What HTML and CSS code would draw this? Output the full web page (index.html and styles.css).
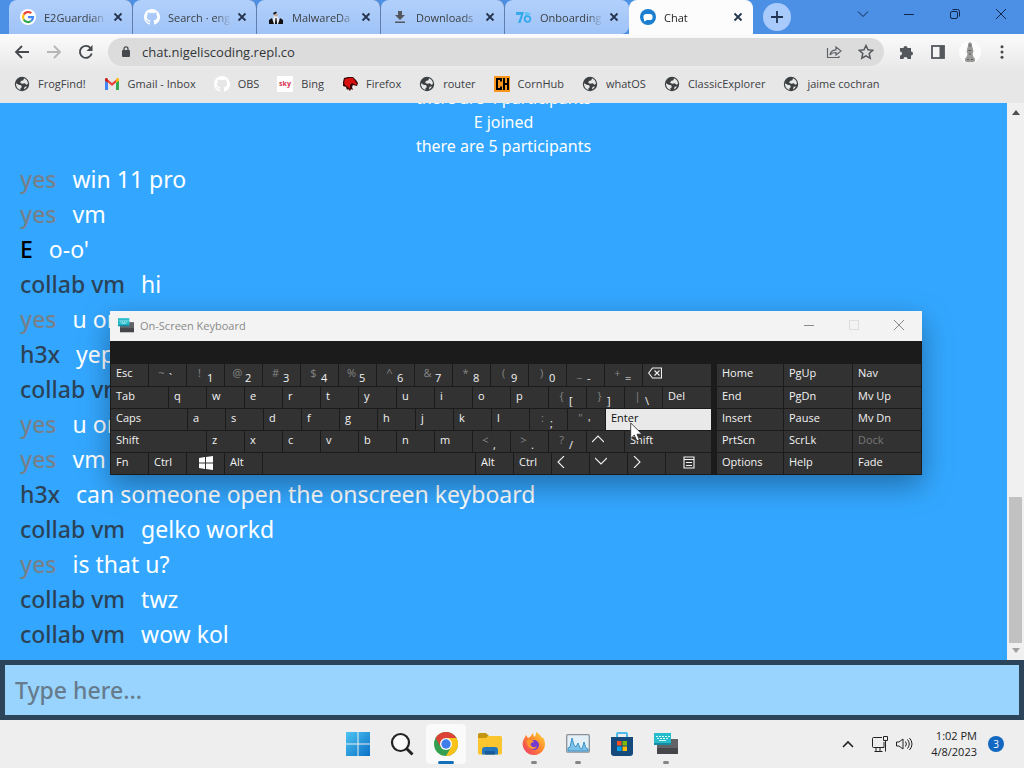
FILE: index.html
```html
<!DOCTYPE html>
<html lang="en">
<head>
    <meta charset="UTF-8">
    <meta name="viewport" content="width=device-width, initial-scale=1.0">
    <title>Chat</title>
    <link rel="stylesheet" href="styles.css">
</head>
<body>
    <!-- shared icons -->
    <svg class="defs" width="0" height="0">
        <symbol id="i-close" viewBox="0 0 10 10"><path d="M1.5 1.5l7 7M8.5 1.5l-7 7" stroke="currentColor" stroke-width="1.8"/></symbol>
        <symbol id="i-globe" viewBox="0 0 16 16"><circle cx="8" cy="8" r="7.2" fill="#3c4043"/><path d="M2 7.2l2.6 1.6 2.6.4.6 2-1.4 1v1.7A6 6 0 0 1 2 7.2zM10 2.3l-.6 2-2.4.8-.8 1.7 2 .9 2.6-.5 1.6 1.6 1.5-.8A6 6 0 0 0 10 2.3zM13 10.4l-2.4.4-.6 2.6a6 6 0 0 0 3-3z" fill="#e8e8e8"/></symbol>
        <symbol id="i-github" viewBox="0 0 16 16"><path fill="#fff" d="M8 0C3.58 0 0 3.58 0 8c0 3.54 2.29 6.53 5.47 7.59.4.07.55-.17.55-.38v-1.49c-2.01.37-2.53-.49-2.69-.94-.09-.23-.48-.94-.82-1.13-.28-.15-.68-.52-.01-.53.63-.01 1.08.58 1.23.82.72 1.21 1.87.87 2.33.66.07-.52.28-.87.51-1.07-1.78-.2-3.64-.89-3.64-3.95 0-.87.31-1.59.82-2.15-.08-.2-.36-1.02.08-2.12 0 0 .67-.21 2.2.82a7.6 7.6 0 0 1 4 0c1.53-1.04 2.2-.82 2.2-.82.44 1.1.16 1.92.08 2.12.51.56.82 1.27.82 2.15 0 3.07-1.87 3.75-3.65 3.95.29.25.54.73.54 1.48v2.2c0 .21.15.46.55.38A8 8 0 0 0 8 0z"/></symbol>
        <symbol id="i-osk" viewBox="0 0 24 22"><path fill="#606266" d="M3 6h21v15H3z"/><path fill="#44464a" d="M3 15h21v6H3z"/><path fill="#27bccb" d="M0 0h17v12H0z"/><path fill="#168ba1" d="M0 10h17v2H0z"/><path fill="#d5f8fa" d="M2 3h2v1H2zM5 3h2v1H5zM8 3h2v1H8zM11 3h2v1h-2zM14 3h2v1h-2zM3 5h2v1H3zM6 5h2v1H6zM9 5h2v1H9zM12 5h2v1h-2zM5 7h7v1H5z"/></symbol>
    </svg>

    <header class="browser">
        <div class="tabstrip">
            <div class="tab">
                <svg class="icon" viewBox="0 0 16 16"><circle cx="8" cy="8" r="8" fill="#fff"/><g fill="none" stroke-width="2.2"><path stroke="#ea4335" d="M3.7 5.5A5 5 0 0 1 11.3 4.2"/><path stroke="#fbbc05" d="M3.7 5.5a5 5 0 0 0 0 5"/><path stroke="#34a853" d="M3.7 10.5a5 5 0 0 0 7.4 1.5"/><path stroke="#4285f4" d="M8 8.2h5a5 5 0 0 1-1.9 3.8"/></g></svg>
                <span class="tab-title">E2Guardian</span>
                <button class="tab-close" aria-label="Close tab"><svg width="10" height="10"><use href="#i-close"/></svg></button>
            </div>
            <div class="tab">
                <svg class="icon"><use href="#i-github"/></svg>
                <span class="tab-title">Search · eng</span>
                <button class="tab-close" aria-label="Close tab"><svg width="10" height="10"><use href="#i-close"/></svg></button>
            </div>
            <div class="tab">
                <svg class="icon" viewBox="0 0 16 16"><path fill="#e8edf5" d="M5 15V9l2-3 2 1 2 3v5z"/><path fill="#111" d="M1 15v-4l3-2 2 6zM15 15v-4l-3-2-2 6zM5 4l3-1.5 1 1.500-3 2zM7.500 9h1l.6 6h-2.200z"/><circle cx="8" cy="6" r="1.600" fill="#c9a58a"/></svg>
                <span class="tab-title">MalwareDa</span>
                <button class="tab-close" aria-label="Close tab"><svg width="10" height="10"><use href="#i-close"/></svg></button>
            </div>
            <div class="tab">
                <svg class="icon" viewBox="0 0 16 16"><path fill="#54585e" d="M6 2h4v4h3L8 11 3 6h3zM3 12.5h10V14H3z"/></svg>
                <span class="tab-title">Downloads</span>
                <button class="tab-close" aria-label="Close tab"><svg width="10" height="10"><use href="#i-close"/></svg></button>
            </div>
            <div class="tab last">
                <svg class="icon" viewBox="0 0 16 16"><path fill="#35a9ec" d="M0 3h8L4.5 14H2L5 6H0z"/><path fill="#5cc3f5" d="M9 3l6 1-2 2-4 1z"/><circle cx="11.5" cy="10" r="2.8" fill="none" stroke="#35a9ec" stroke-width="1.8"/></svg>
                <span class="tab-title">Onboarding</span>
                <button class="tab-close" aria-label="Close tab"><svg width="10" height="10"><use href="#i-close"/></svg></button>
            </div>
            <div class="tab active">
                <svg class="icon" viewBox="0 0 16 16"><circle cx="8" cy="8" r="8" fill="#1a7fd0"/><rect x="3.5" y="5" width="9" height="6" rx="2.6" fill="#fff"/><path fill="#fff" d="M4 7v5.500l4-2z"/></svg>
                <span class="tab-title">Chat</span>
                <button class="tab-close" aria-label="Close tab"><svg width="10" height="10"><use href="#i-close"/></svg></button>
            </div>
            <button class="new-tab" aria-label="New tab"><svg width="12" height="12" viewBox="0 0 12 12"><path d="M6 0v12M0 6h12" stroke="#1f3350" stroke-width="1.8"/></svg></button>
            <div class="window-buttons">
                <button aria-label="Search tabs"><svg width="12" height="12" viewBox="0 0 12 12"><path d="M1 3.5l5 5 5-5"/></svg></button>
                <button aria-label="Minimize"><svg width="12" height="12" viewBox="0 0 12 12"><path d="M1 6.5h10"/></svg></button>
                <button aria-label="Restore"><svg width="12" height="12" viewBox="0 0 12 12"><rect x="1.5" y="3.5" width="7" height="7" rx="1.5"/><path d="M3.5 1.5h5a2 2 0 0 1 2 2v5"/></svg></button>
                <button aria-label="Close"><svg width="12" height="12" viewBox="0 0 12 12"><path d="M1 1l10 10M11 1L1 11"/></svg></button>
            </div>
        </div>

        <div class="toolbar">
            <button class="tool" aria-label="Back"><svg class="icon" viewBox="0 0 16 16"><path d="M15 8H2M8 2L2 8l6 6" fill="none" stroke="#45494d" stroke-width="1.8"/></svg></button>
            <button class="tool" aria-label="Forward"><svg class="icon" viewBox="0 0 16 16"><path d="M1 8h13M8 2l6 6-6 6" fill="none" stroke="#b4b6b8" stroke-width="1.8"/></svg></button>
            <button class="tool" aria-label="Reload"><svg class="icon" viewBox="0 0 16 16"><path d="M13.7 9.5A6 6 0 1 1 12.5 4" fill="none" stroke="#45494d" stroke-width="1.9"/><path d="M14.5 1v6h-6z" fill="#45494d"/></svg></button>
            <div class="omnibox">
                <svg width="12" height="14" viewBox="0 0 12 14"><rect x="2" y="5" width="8" height="7" rx="1" fill="#45494d"/><path d="M4 5.5V3.8a2 2 0 0 1 4 0v1.7" fill="none" stroke="#45494d" stroke-width="1.3"/></svg>
                <input type="text" value="chat.nigeliscoding.repl.co" aria-label="Address">
                <button class="tool" aria-label="Share"><svg class="icon" viewBox="0 0 16 16"><path d="M1.5 4v9.5H13V12M4 11c.5-3.5 2.5-5 6-5.2V3l5 4-5 4V8.5c-3 0-4.5.5-6 2.5z" fill="none" stroke="#5f6368" stroke-width="1.2"/></svg></button>
                <button class="tool" aria-label="Bookmark this tab"><svg class="icon" viewBox="0 0 16 16"><path d="M8 1.5l2 4.3 4.7.5-3.5 3.2 1 4.7L8 11.8l-4.2 2.4 1-4.7-3.5-3.2 4.7-.5z" fill="none" stroke="#55595d" stroke-width="1.5"/></svg></button>
            </div>
            <button class="tool" aria-label="Extensions"><svg class="icon" viewBox="0 0 16 16"><path d="M2 4h3.500a2 2 0 1 1 4 0H13v3.500a2 2 0 1 1 0 4V15H9.500a2 2 0 0 0-4 0H2v-3.500a2 2 0 0 0 0-4z" fill="#54585c"/></svg></button>
            <button class="tool" aria-label="Side panel"><svg class="icon" viewBox="0 0 16 16"><rect x="2" y="2" width="12" height="12" fill="#f4f4f4" stroke="#54585c" stroke-width="1.8"/><path d="M9.5 2H14v12H9.5z" fill="#54585c"/></svg></button>
            <button class="tool" aria-label="Profile"><svg width="22" height="22" viewBox="0 0 22 22"><circle cx="11" cy="11" r="11" fill="#fcfcfc"/><path d="M11 1q2.500 1 2 4l1 3q1 3-.5 5l1 3q2 1 1.500 4-2 2-5 1-3 1-5-1-.5-3 1.500-4l1-3Q7 11 8 8l1-3q-.5-3 2-4z" fill="#9a9a98"/><path d="M11 3v3M9.500 9.500h3M10 13h2M8 18.500h2M12 18.500h2" stroke="#5d5d5b"/></svg></button>
            <button class="tool" aria-label="Menu"><svg class="icon" viewBox="0 0 16 16" fill="#45494d"><circle cx="8" cy="2.8" r="1.5"/><circle cx="8" cy="8" r="1.5"/><circle cx="8" cy="13.2" r="1.5"/></svg></button>
        </div>

        <nav class="bookmarks">
            <a href="#"><svg class="icon"><use href="#i-globe"/></svg>FrogFind!</a>
            <a href="#"><svg class="icon" viewBox="0 0 16 16"><path fill="#4285f4" d="M1 4l3 2.5V14H1z"/><path fill="#34a853" d="M12 6.5L15 4v10h-3z"/><path fill="#ea4335" d="M1 3l1.500-.5L8 7l5.500-4.500L12 6.500 8 10 4 6.500 1 4.500z"/><path fill="#c5221f" d="M1 5V3.500A1.500 1.500 0 0 1 3.500 2.300L4 6.500z"/><path fill="#fbbc04" d="M15 5V3.500a1.500 1.500 0 0 0-2.500-1.200L12 6.500z"/></svg>Gmail - Inbox</a>
            <a href="#"><svg class="icon"><use href="#i-github"/></svg>OBS</a>
            <a href="#"><svg class="icon" viewBox="0 0 16 16"><path fill="#fff" d="M0 0h16v16H0z"/><text x="8" y="10" text-anchor="middle" class="sky">sky</text></svg>Bing</a>
            <a href="#"><svg class="icon" viewBox="0 0 16 16"><path fill="#3b0505" d="M2 2l4-1h5l3 3 2 3-1 3-4-1-1 2 1 3-2-1-1 2-2-2-1 1-1-3-3-1V6z"/><path fill="#d80f0f" d="M3 3l4-1h4l2 3 2 3-1 1-4-2-2 2v4l-2-2-2-1-2-3z"/></svg>Firefox</a>
            <a href="#"><svg class="icon"><use href="#i-globe"/></svg>router</a>
            <a href="#"><svg class="icon" viewBox="0 0 16 16"><path fill="#f7971d" d="M0 0h16v16H0z"/><path fill="none" stroke="#000" stroke-width="2" d="M7 5.500V3H3v10h4v-2.500M10 2v12M14 2v12M10 8h4"/></svg>CornHub</a>
            <a href="#"><svg class="icon"><use href="#i-globe"/></svg>whatOS</a>
            <a href="#"><svg class="icon"><use href="#i-globe"/></svg>ClassicExplorer</a>
            <a href="#"><svg class="icon"><use href="#i-globe"/></svg>jaime cochran</a>
        </nav>
    </header>

    <main class="chat">
        <div class="pages">
            <ul class="messages">
                <li class="log">there are 4 participants</li>
                <li class="log">E joined</li>
                <li class="log">there are 5 participants</li>
                <li class="message"><span class="name yes">yes</span>win 11 pro</li>
                <li class="message"><span class="name yes">yes</span>vm</li>
                <li class="message"><span class="name e">E</span>o-o'</li>
                <li class="message"><span class="name">collab vm</span>hi</li>
                <li class="message"><span class="name yes">yes</span>u on</li>
                <li class="message"><span class="name">h3x</span>yep</li>
                <li class="message"><span class="name">collab vm</span></li>
                <li class="message"><span class="name yes">yes</span>u on</li>
                <li class="message"><span class="name yes">yes</span>vm</li>
                <li class="message"><span class="name">h3x</span>can someone open the onscreen keyboard</li>
                <li class="message"><span class="name">collab vm</span>gelko workd</li>
                <li class="message"><span class="name yes">yes</span>is that u?</li>
                <li class="message"><span class="name">collab vm</span>twz</li>
                <li class="message"><span class="name">collab vm</span>wow kol</li>
            </ul>
            <div class="scrollbar">
                <svg width="8" height="5" viewBox="0 0 8 5"><path d="M0 5l4-5 4 5z" fill="#505050"/></svg>
                <div class="track"><div class="thumb"></div></div>
                <svg width="8" height="5" viewBox="0 0 8 5"><path d="M0 0l4 5 4-5z" fill="#a0a0a0"/></svg>
            </div>
        </div>
        <input class="input-message" type="text" placeholder="Type here..." aria-label="Message">
    </main>

    <section class="osk" aria-label="On-Screen Keyboard">
        <div class="osk-title">
            <svg width="16" height="15"><use href="#i-osk"/></svg>
            <span>On-Screen Keyboard</span>
            <button aria-label="Minimize"><svg width="12" height="12" viewBox="0 0 12 12"><path d="M1 6.5h10" stroke="#8a8a8a"/></svg></button>
            <button aria-label="Maximize" disabled><svg width="12" height="12" viewBox="0 0 12 12"><rect x="1.5" y="1.5" width="9" height="9" fill="none" stroke="#dedede"/></svg></button>
            <button aria-label="Close"><svg width="12" height="12" viewBox="0 0 12 12"><path d="M1 1l10 10M11 1L1 11" stroke="#8a8a8a"/></svg></button>
        </div>
        <div class="osk-body">
            <div class="keys">
                <div class="row top">
                    <button class="key">Esc</button>
                    <button class="key two"><i>~</i><b>`</b></button>
                    <button class="key two"><i>!</i><b>1</b></button>
                    <button class="key two"><i>@</i><b>2</b></button>
                    <button class="key two"><i>#</i><b>3</b></button>
                    <button class="key two"><i>$</i><b>4</b></button>
                    <button class="key two"><i>%</i><b>5</b></button>
                    <button class="key two"><i>^</i><b>6</b></button>
                    <button class="key two"><i>&amp;</i><b>7</b></button>
                    <button class="key two"><i>*</i><b>8</b></button>
                    <button class="key two"><i>(</i><b>9</b></button>
                    <button class="key two"><i>)</i><b>0</b></button>
                    <button class="key two"><i>_</i><b>-</b></button>
                    <button class="key two"><i>+</i><b>=</b></button>
                    <button class="key wide" aria-label="Backspace"><svg width="14" height="12" viewBox="0 0 14 12"><path d="M4.5 1h9v10h-9L.7 6zM6.500 3.500l5 5M11.500 3.500l-5 5"/></svg></button>
                </div>
                <div class="row">
                    <button class="key tab-key">Tab</button>
                    <button class="key">q</button>
                    <button class="key">w</button>
                    <button class="key">e</button>
                    <button class="key">r</button>
                    <button class="key">t</button>
                    <button class="key">y</button>
                    <button class="key">u</button>
                    <button class="key">i</button>
                    <button class="key">o</button>
                    <button class="key">p</button>
                    <button class="key two"><i>{</i><b>[</b></button>
                    <button class="key two"><i>}</i><b>]</b></button>
                    <button class="key two"><i>|</i><b>\</b></button>
                    <button class="key wide">Del</button>
                </div>
                <div class="row">
                    <button class="key caps-key">Caps</button>
                    <button class="key">a</button>
                    <button class="key">s</button>
                    <button class="key">d</button>
                    <button class="key">f</button>
                    <button class="key">g</button>
                    <button class="key">h</button>
                    <button class="key">j</button>
                    <button class="key">k</button>
                    <button class="key">l</button>
                    <button class="key two"><i>:</i><b>;</b></button>
                    <button class="key two"><i>"</i><b>'</b></button>
                    <button class="key wide pressed">Enter</button>
                </div>
                <div class="row">
                    <button class="key shift-key">Shift</button>
                    <button class="key">z</button>
                    <button class="key">x</button>
                    <button class="key">c</button>
                    <button class="key">v</button>
                    <button class="key">b</button>
                    <button class="key">n</button>
                    <button class="key">m</button>
                    <button class="key two"><i>&lt;</i><b>,</b></button>
                    <button class="key two"><i>&gt;</i><b>.</b></button>
                    <button class="key two"><i>?</i><b>/</b></button>
                    <button class="key" aria-label="Up"><svg width="12" height="12" viewBox="0 0 12 12"><path d="M0 8l6-6 6 6"/></svg></button>
                    <button class="key wide">Shift</button>
                </div>
                <div class="row">
                    <button class="key">Fn</button>
                    <button class="key">Ctrl</button>
                    <button class="key center" aria-label="Windows"><svg width="14" height="14" viewBox="0 0 14 14"><path class="solid" d="M0 2l6-.9v5.400H0zM7 1l7-1v6.500H7zM0 7.500h6v5.400L0 12zM7 7.500h7V14l-7-1z"/></svg></button>
                    <button class="key">Alt</button>
                    <button class="key wide" aria-label="Space"></button>
                    <button class="key">Alt</button>
                    <button class="key">Ctrl</button>
                    <button class="key" aria-label="Left"><svg width="12" height="12" viewBox="0 0 12 12"><path d="M7 0L1 6l6 6"/></svg></button>
                    <button class="key" aria-label="Down"><svg width="12" height="12" viewBox="0 0 12 12"><path d="M0 2l6 6 6-6"/></svg></button>
                    <button class="key" aria-label="Right"><svg width="12" height="12" viewBox="0 0 12 12"><path d="M1 0l6 6-6 6"/></svg></button>
                    <button class="key center menu-key" aria-label="Menu"><svg width="12" height="13" viewBox="0 0 12 13"><path d="M1 1h10v11H1zM1 3.500h10M3 6.500h6M3 9.500h6"/></svg></button>
                </div>
            </div>
            <div class="side">
                <button class="key">Home</button><button class="key">PgUp</button><button class="key">Nav</button>
                <button class="key">End</button><button class="key">PgDn</button><button class="key">Mv Up</button>
                <button class="key">Insert</button><button class="key">Pause</button><button class="key">Mv Dn</button>
                <button class="key">PrtScn</button><button class="key">ScrLk</button><button class="key" disabled>Dock</button>
                <button class="key">Options</button><button class="key">Help</button><button class="key">Fade</button>
            </div>
        </div>
    </section>

    <svg class="cursor" width="13" height="20" viewBox="0 0 13 20"><path d="M.7 1v15.500l3.600-3.400 2.500 5.700 2.600-1.100L7 12.200h5z" fill="#fff" stroke="#222" stroke-width=".8"/></svg>

    <footer class="taskbar">
        <div class="apps">
            <button aria-label="Start"><svg width="24" height="24" viewBox="0 0 24 24"><defs><linearGradient id="win" x1="0" y1="0" x2="1" y2="1"><stop offset="0" stop-color="#4cc5f2"/><stop offset="1" stop-color="#0b6fc7"/></linearGradient></defs><path fill="url(#win)" d="M0 0h11.500v11.500H0zM12.500 0H24v11.500H12.500zM0 12.500h11.500V24H0zM12.500 12.500H24V24H12.500z"/></svg></button>
            <button aria-label="Search"><svg width="24" height="24" viewBox="0 0 24 24"><circle cx="10.5" cy="10.5" r="8.500" fill="#fafafa" stroke="#222" stroke-width="2.2"/><path d="M16.500 16.500l6 6" stroke="#222" stroke-width="3"/></svg></button>
            <button class="current" aria-label="Chrome"><svg width="24" height="24" viewBox="0 0 24 24"><circle cx="12" cy="12" r="12" fill="#34a04f"/><path fill="#dd4237" d="M1.600 6A12 12 0 0 1 22.400 6H12l-5.200 9z"/><path fill="#fbc21a" d="M22.400 6A12 12 0 0 1 12 24l5.200-9L12 6z"/><circle cx="12" cy="12" r="6" fill="#fff"/><circle cx="12" cy="12" r="4.700" fill="#3f7de8"/></svg></button>
            <button aria-label="File Explorer"><svg width="24" height="22" viewBox="0 0 24 22"><path fill="#c49511" d="M0 1.500Q0 0 1.500 0H8l3 3-3 3H0z"/><path fill="#fbc52f" d="M0 5h8l2-2h12.500Q24 3 24 4.500V20q0 1.500-1.500 1.500h-21Q0 21.500 0 20z"/><path fill="#2577bd" d="M4 21.500V17q0-3 3-3h10q3 0 3 3v4.500z"/><path fill="#185a9a" d="M7 18h10v3.500H7z"/></svg></button>
            <button class="running" aria-label="Firefox"><svg width="24" height="24" viewBox="0 0 24 24"><defs><linearGradient id="fox" x1="1" y1="0" x2="0" y2="1"><stop offset="0" stop-color="#ffdc3e"/><stop offset=".45" stop-color="#ff8a2b"/><stop offset="1" stop-color="#ef2f6b"/></linearGradient></defs><path fill="url(#fox)" d="M2.500 6L4 3l2 3 2-1 3-4 1 4c2-1 2-3 2-5 3 1.500 5 4 6 6l1-.5c2 3 2.500 6 1.500 10A11.300 11.300 0 0 1 .8 14C.3 11 1 8 2.500 6z"/><circle cx="12" cy="13" r="5" fill="#743bd0"/><path fill="#ff9a2e" d="M5 8c3-1 6 0 7 2l-3 1c-1 2 0 3 2 4 2 .5 3 0 4-1-1 4-7 4-9 0C5 12 4.500 10 5 8z"/></svg></button>
            <button class="running" aria-label="Task Manager"><svg width="24" height="20" viewBox="0 0 24 20"><rect x=".7" y=".7" width="22.600" height="17.500" rx="1" fill="#e3f0f8" stroke="#8b9097" stroke-width="1.300"/><path fill="#7cc1e8" stroke="#2484bd" stroke-width=".8" d="M2 17v-3l2-1 2-9 2 7 2 2 2-4 2 5 2 1 2-7 2 6 2 1v2z"/></svg></button>
            <button aria-label="Microsoft Store"><svg width="24" height="24" viewBox="0 0 24 24"><path fill="none" stroke="#4bbbe9" stroke-width="2" d="M7 6V2q0-1 1-1h8q1 0 1 1v4"/><path fill="#174a7c" d="M1 5h22v16q0 3-3 3H4q-3 0-3-3z"/><path fill="#f25022" d="M7 9h4.500v4.500H7z"/><path fill="#7fba00" d="M12.500 9H17v4.500h-4.500z"/><path fill="#00a4ef" d="M7 14.500h4.500V19H7z"/><path fill="#ffb900" d="M12.500 14.500H17V19h-4.500z"/></svg></button>
            <button class="running" aria-label="On-Screen Keyboard"><svg width="24" height="22"><use href="#i-osk"/></svg></button>
        </div>
        <div class="tray">
            <button aria-label="Show hidden icons"><svg width="12" height="12" viewBox="0 0 12 12"><path d="M1 9l5-5 5 5" stroke-width="1.600"/></svg></button>
            <button aria-label="Network"><svg width="18" height="18" viewBox="0 0 18 18"><path d="M11 2.500H2.500q-1 0-1 1v8q0 1 1 1H13V7M5 12.500V16M9 12.500V16M3.500 16.500h8M12.500 1.500h4v4h-4zM14.500 5.500v11"/></svg></button>
            <button aria-label="Volume"><svg width="18" height="18" viewBox="0 0 18 18"><path d="M1.500 7v4H4l4 3V4L4 7zM10.500 6.500q1.800 2.500 0 5M12.500 4.500q3.500 4.500 0 9M14.500 3q5 6 0 12"/></svg></button>
            <div class="clock"><time>1:02 PM</time><time>4/8/2023</time></div>
            <button class="badge" aria-label="3 notifications">3</button>
        </div>
    </footer>
</body>
</html>
```

FILE: styles.css
```css
* {
    box-sizing: border-box;
}
body {
    margin: 0;
    height: 100vh;
    display: flex;
    flex-direction: column;
    overflow: hidden;
    font-family: "Open Sans", "Noto Sans", sans-serif;
    font-size: 11px;
    color: #3c4043;
}
button {
    font: inherit;
    color: inherit;
    background: none;
    border: none;
    padding: 0;
    display: flex;
    align-items: center;
    justify-content: center;
}
svg {
    display: block;
    flex: none;
}
.defs {
    position: absolute;
}
.icon {
    width: 16px;
    height: 16px;
}

/* tabs */
.tabstrip {
    display: flex;
    height: 34px;
    padding-left: 9px;
    background: #4b90e4;
}
.tab {
    display: flex;
    align-items: center;
    flex: 0 1 124px;
    min-width: 0;
    padding: 0 9px 0 11px;
    background: linear-gradient(#b2d0fb, #9fc3f7);
    border-right: 1px solid #5f7fae;
    border-radius: 8px 8px 0 0;
}
.tab.last {
    border-right-color: transparent;
    border-radius: 8px 8px 8px 0;
}
.tab.active {
    background: #fcfcfc;
    border-right-color: #fcfcfc;
    color: #222;
}
.tab-title {
    flex: 1;
    min-width: 0;
    margin: 0 6px 0 8px;
    overflow: hidden;
    white-space: nowrap;
    -webkit-mask-image: linear-gradient(90deg, #000 75%, transparent);
    mask-image: linear-gradient(90deg, #000 75%, transparent);
}
.tab-close {
    color: #25354d;
}
.new-tab {
    width: 28px;
    height: 28px;
    margin: 3px 10px;
    border-radius: 50%;
    background: #a9cbfb;
}
.window-buttons {
    display: flex;
    margin-left: auto;
    height: 28px;
}
.window-buttons button {
    width: 46px;
}
.window-buttons path,
.window-buttons rect {
    fill: none;
    stroke: #10254a;
}

/* toolbar */
.toolbar {
    display: flex;
    align-items: center;
    height: 36px;
    padding: 0 6px;
    background: linear-gradient(#fbfbfb, #e9e9e9);
}
.tool {
    width: 32px;
    height: 28px;
}
.omnibox {
    flex: 1;
    display: flex;
    align-items: center;
    height: 28px;
    margin: 0 6px;
    padding: 0 2px 0 12px;
    border-radius: 14px;
    background: #dcdcdc;
}
.omnibox input {
    flex: 1;
    margin-left: 10px;
    padding: 0;
    border: none;
    background: none;
    font: inherit;
    font-size: 13px;
    color: #333639;
}
.bookmarks {
    display: flex;
    align-items: center;
    gap: 18px;
    height: 33px;
    padding: 0 14px 6px;
    background: #e7e7e7;
    overflow: hidden;
}
.bookmarks a {
    display: flex;
    align-items: center;
    gap: 8px;
    white-space: nowrap;
    color: inherit;
    text-decoration: none;
}
.sky {
    font-size: 7px;
    font-weight: bold;
    fill: #d8304e;
}

/* chat */
.chat {
    flex: 1;
    min-height: 0;
    display: flex;
    flex-direction: column;
    font-family: "Noto Sans", sans-serif;
}
.pages {
    flex: 1;
    min-height: 0;
    display: flex;
    background: #33a7ff;
}
.messages {
    flex: 1;
    display: flex;
    flex-direction: column;
    justify-content: flex-end;
    margin: 0;
    padding: 0 20px 8px;
    list-style: none;
    overflow: hidden;
    color: #fff;
}
.log {
    flex: none;
    text-align: center;
    font-size: 16px;
    line-height: 24px;
}
.log + .message {
    margin-top: 4px;
}
.message {
    flex: none;
    font-size: 23px;
    line-height: 35px;
}
.name {
    margin-right: 16px;
    font-weight: 500;
    color: #2b4257;
}
.name.yes {
    color: #76808b;
}
.name.e {
    color: #000;
}
.scrollbar {
    width: 17px;
    padding: 7px 0;
    display: flex;
    flex-direction: column;
    align-items: center;
    background: #f0f0f0;
}
.track {
    flex: 1;
    display: flex;
    flex-direction: column;
    justify-content: flex-end;
    padding: 5px 0;
}
.thumb {
    width: 13px;
    height: 28%;
    background: #c1c1c1;
}
.input-message {
    width: 100%;
    height: 60px;
    padding: 0 10px;
    border: 5px solid #2c4459;
    background: #99d4ff;
    font-family: inherit;
    font-size: 23px;
    font-weight: 500;
    outline: none;
}
.input-message::placeholder {
    color: #667b8c;
}

/* on-screen keyboard */
.osk {
    position: absolute;
    left: 110px;
    top: 311px;
    width: 812px;
    background: #1b1b1b;
    color: #f2f2f2;
    box-shadow: 0 10px 28px rgba(0, 0, 0, 0.35);
}
.osk-title {
    display: flex;
    align-items: center;
    height: 30px;
    padding: 0 1px 2px 8px;
    background: #f3f3f3;
    color: #8a8a8a;
}
.osk-title span {
    flex: 1;
    margin-left: 6px;
}
.osk-title button {
    width: 45px;
    height: 28px;
}
.osk-body {
    display: flex;
    gap: 6px;
    padding: 23px 1px 1px;
}
.keys {
    flex: 1;
    display: flex;
    flex-direction: column;
    gap: 1px;
}
.row {
    display: flex;
    gap: 1px;
}
.key {
    flex: none;
    width: 37px;
    height: 21px;
    padding-left: 5px;
    justify-content: flex-start;
    background: #323232;
    line-height: 18px;
    align-items: flex-start;
}
.top .key,
.side .key:nth-child(-n+3) {
    height: 22px;
}
.key.wide {
    flex: 1;
}
.tab-key {
    width: 57px;
}
.caps-key {
    width: 76px;
}
.shift-key {
    width: 95px;
}
.menu-key {
    width: 45px;
}
.key.center {
    padding: 0;
    justify-content: center;
}
.key.pressed {
    background: #e9e9e9;
    color: #111;
}
.key:disabled {
    color: #777;
}
.key i,
.key b {
    font-style: normal;
    font-weight: normal;
}
.key i {
    width: 15px;
    color: #858585;
}
.key b {
    line-height: 27px;
}
.key svg {
    margin-top: 3px;
}
.key path {
    fill: none;
    stroke: #f2f2f2;
    stroke-width: 1.1;
}
.key .solid {
    fill: #fff;
    stroke: none;
}
.side {
    display: grid;
    grid-template-columns: 66px 68px 68px;
    gap: 1px;
}
.side .key {
    width: auto;
}
.cursor {
    position: absolute;
    left: 630px;
    top: 422px;
}

/* taskbar */
.taskbar {
    display: grid;
    grid-template-columns: 1fr auto 1fr;
    height: 48px;
    background: #eeeeee;
}
.apps {
    grid-column: 2;
    display: flex;
    align-items: center;
    gap: 4px;
}
.apps button {
    position: relative;
    width: 40px;
    height: 40px;
    border-radius: 4px;
}
.apps .current {
    background: #fafafa;
}
.apps .current::after,
.apps .running::after {
    content: "";
    position: absolute;
    bottom: 0;
    width: 6px;
    height: 3px;
    border-radius: 2px;
    background: #858585;
}
.apps .current::after {
    width: 16px;
    background: #1470b8;
}
.tray {
    display: flex;
    align-items: center;
    justify-content: flex-end;
    padding-right: 20px;
    color: #222;
}
.tray button {
    width: 24px;
    height: 40px;
}
.tray button:first-child {
    margin-right: 8px;
}
.tray path {
    fill: none;
    stroke: #222;
}
.clock {
    display: flex;
    flex-direction: column;
    align-items: flex-end;
    width: 61px;
    line-height: 16px;
}
.tray .badge {
    width: 16px;
    height: 16px;
    margin-left: 11px;
    border-radius: 50%;
    background: #1268c0;
    color: #fff;
    font-size: 10px;
}
```
